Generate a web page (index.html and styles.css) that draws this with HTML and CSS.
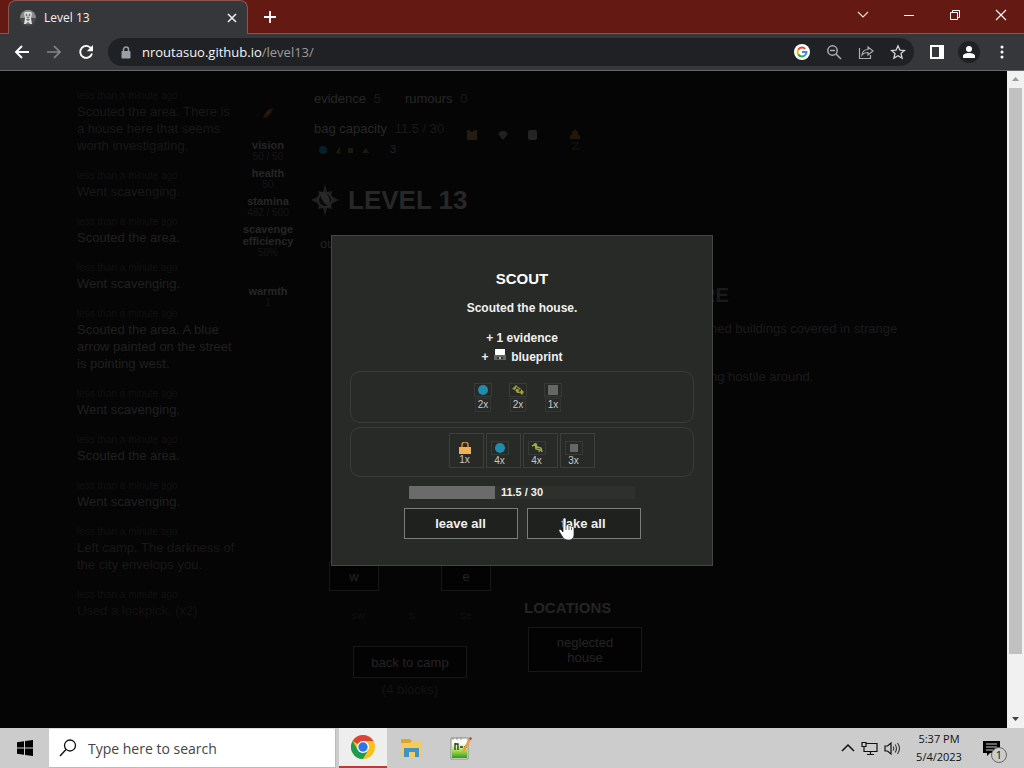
FILE: index.html
```html
<!DOCTYPE html>
<html lang="en">
<head>
<meta charset="utf-8">
<meta name="viewport" content="width=device-width, initial-scale=1">
<title>Level 13</title>
<link rel="stylesheet" href="styles.css">
</head>
<body>
<header class="tabbar">
  <div class="tab">
    <svg class="favicon" width="16" height="16" viewBox="0 0 16 16"><circle cx="8" cy="8" r="8" fill="#4a4a4a"/><path d="M0 8a8 8 0 0 1 16 0z" fill="#8a8a8a"/><path d="M5 2h6l1 2-1 4 1 6H4l1-6-1-4z" fill="#ddd"/><path d="M6 4h1v2H6zM9 4h1v2H9zM7 7h2v1H7zM6 9l2 2 2-2M6 14l2-2 2 2" fill="#777" stroke="#777" stroke-width=".6"/></svg>
    <span class="tab-title">Level 13</span>
    <button class="icon-btn" aria-label="Close tab"><svg width="10" height="10" viewBox="0 0 10 10"><path d="M1 1l8 8M9 1L1 9" stroke="#eee" stroke-width="1.6"/></svg></button>
  </div>
  <button class="icon-btn new-tab" aria-label="New tab"><svg width="14" height="14" viewBox="0 0 14 14"><path d="M7 1v12M1 7h12" stroke="#fff" stroke-width="1.8"/></svg></button>
  <div class="window-controls">
    <button class="icon-btn" aria-label="Search tabs"><svg width="12" height="12" viewBox="0 0 12 12"><path d="M1 3l5 5 5-5" fill="none" stroke="#f2ddd9" stroke-width="1.1"/></svg></button>
    <button class="icon-btn" aria-label="Minimize"><svg width="12" height="12" viewBox="0 0 12 12"><path d="M1 6.5h10" stroke="#fff"/></svg></button>
    <button class="icon-btn" aria-label="Restore"><svg width="12" height="12" viewBox="0 0 12 12"><path d="M3.5 3V1.500h7v7H9M1.500 3.500h7v7h-7z" fill="none" stroke="#fff"/></svg></button>
    <button class="icon-btn" aria-label="Close"><svg width="12" height="12" viewBox="0 0 12 12"><path d="M1 1l10 10M11 1L1 11" stroke="#fff" stroke-width="1.1"/></svg></button>
  </div>
</header>
<nav class="toolbar">
  <button class="icon-btn" aria-label="Back"><svg width="16" height="16" viewBox="0 0 16 16"><path d="M15 8H2M8 2L2 8l6 6" fill="none" stroke="#fff" stroke-width="1.9"/></svg></button>
  <button class="icon-btn" aria-label="Forward"><svg width="16" height="16" viewBox="0 0 16 16"><path d="M1 8h13M8 2l6 6-6 6" fill="none" stroke="#85878a" stroke-width="1.7"/></svg></button>
  <button class="icon-btn" aria-label="Reload"><svg width="16" height="16" viewBox="0 0 16 16"><path d="M13.200 4.500A6 6 0 1 0 14 9.500" fill="none" stroke="#fff" stroke-width="1.900"/><path d="M15 1v6.200H8.800z" fill="#fff"/></svg></button>
  <div class="omnibox">
    <svg width="10" height="13" viewBox="0 0 10 13"><path d="M2.500 6V3.500a2.500 2.500 0 0 1 5 0V6" fill="none" stroke="#9aa0a6" stroke-width="1.500"/><rect x=".5" y="5" width="9" height="7.500" rx="1" fill="#9aa0a6"/></svg>
    <span class="url">nroutasuo.github.io<span class="path">/level13/</span></span>
    <div class="omni-icons">
      <svg width="16" height="16" viewBox="0 0 16 16"><circle cx="8" cy="8" r="8" fill="#fff"/><g fill="none" stroke-width="2"><path d="M4.200 5.600A4.500 4.500 0 0 1 11.200 4.900" stroke="#ea4335"/><path d="M4.200 10.400a4.600 4.600 0 0 1 0-4.800" stroke="#fbbc05"/><path d="M11 11.300a4.500 4.500 0 0 1-6.800-.9" stroke="#34a853"/><path d="M8 8h4.500a4.500 4.500 0 0 1-1.500 3.300" stroke="#4285f4"/></g></svg>
      <svg width="16" height="16" viewBox="0 0 16 16"><g fill="none" stroke="#aaadb1" stroke-width="1.500"><circle cx="6.500" cy="6.500" r="4.700"/><path d="M10 10l5 5M4 6.500h5"/></g></svg>
      <svg width="16" height="16" viewBox="0 0 16 16"><g fill="none" stroke="#aaadb1" stroke-width="1.200"><path d="M1.500 4v10.500h11V11"/><path d="M4 11c.5-4 2.500-5.500 6-5.500V3l5 4-5 4V8.500C7 8.500 5.500 9 4 11z"/></g></svg>
      <svg width="16" height="16" viewBox="0 0 16 16"><path d="M8 1.800l1.900 4.300 4.600.4L11 9.500l1.100 4.600L8 11.700l-4.100 2.400L5 9.500 1.500 6.500l4.600-.4z" fill="none" stroke="#d0d2d5" stroke-width="1.300"/></svg>
    </div>
  </div>
  <div class="tools">
    <button class="icon-btn" aria-label="Side panel"><svg width="14" height="14" viewBox="0 0 14 14"><path d="M1 1h12v12H1z" fill="none" stroke="#fff" stroke-width="2"/><path d="M9 1h4v12H9z" fill="#fff"/></svg></button>
    <button class="icon-btn" aria-label="Profile"><svg width="22" height="22" viewBox="0 0 22 22"><circle cx="11" cy="11" r="11" fill="#202124"/><circle cx="11" cy="8" r="3" fill="#fff"/><path d="M5 17v-2c0-4 12-4 12 0v2z" fill="#fff"/></svg></button>
    <button class="icon-btn" aria-label="Menu"><svg width="16" height="16" viewBox="0 0 16 16" fill="#fff"><circle cx="8" cy="3" r="1.500"/><circle cx="8" cy="8" r="1.500"/><circle cx="8" cy="13" r="1.500"/></svg></button>
  </div>
</nav>

<div class="viewport">
  <main class="game">
    <ul class="log">
      <li class="faint"><small>less than a minute ago</small><p>Scouted the area. There is<br>a house here that seems<br>worth investigating.</p></li>
      <li class="faint"><small>less than a minute ago</small><p>Went scavenging.</p></li>
      <li><small>less than a minute ago</small><p>Scouted the area.</p></li>
      <li><small>less than a minute ago</small><p>Went scavenging.</p></li>
      <li><small>less than a minute ago</small><p>Scouted the area. A blue<br>arrow painted on the street<br>is pointing west.</p></li>
      <li><small>less than a minute ago</small><p>Went scavenging.</p></li>
      <li><small>less than a minute ago</small><p>Scouted the area.</p></li>
      <li><small>less than a minute ago</small><p>Went scavenging.</p></li>
      <li class="faint"><small>less than a minute ago</small><p>Left camp. The darkness of<br>the city envelops you.</p></li>
      <li class="fainter"><small>less than a minute ago</small><p>Used a lockpick. (x2)</p></li>
    </ul>
    <aside class="stats">
      <svg width="18" height="18" viewBox="0 0 18 18"><path d="M14 3c-4 0-9 4-10 10 5 1 9-4 10-10z" fill="#240d06"/><path d="M12 4c-3 2-5 4-6 7 3-1 5-3 6-7z" fill="#25211b"/></svg>
      <dl>
        <dt>vision</dt><dd>50 / 50</dd>
        <dt>health</dt><dd>50</dd>
        <dt>stamina</dt><dd>482 / 500</dd>
        <dt>scavenge<br>efficiency</dt><dd>50%</dd>
        <dt class="warmth">warmth</dt><dd>1</dd>
      </dl>
    </aside>
    <section class="world">
      <div class="resources">
        <div class="bag">
          <p><b>evidence</b> <i>5</i><b class="next">rumours</b> <i>0</i></p>
          <p class="capacity"><b>bag capacity</b> <i>11.5 / 30</i></p>
          <svg width="76" height="12" viewBox="0 0 76 12"><circle cx="9" cy="6" r="4" fill="#06202a"/><path d="M22 9l4-7v8M34 4h5v5h-5zM48 9l4-5 3 5zM64 4l5 4" fill="#1b180c"/></svg><span class="count">3</span>
        </div>
        <svg class="items" width="120" height="28" viewBox="0 0 120 28"><path d="M2 3h2l3 2 3-2h2v10H2z" fill="#231d0f"/><path d="M33 7l3-3h4l3 3-5 6z" fill="#1f2020"/><rect x="63" y="3" width="9" height="10" rx="2" fill="#242424"/><path d="M105 12V8h10v4zM107 8V5l3-3 3 3v3" fill="#221608"/><path d="M106 16h8l-7 6h8" fill="none" stroke="#1b1407"/></svg>
      </div>
      <h1><svg width="34" height="34" viewBox="0 0 34 34"><path d="M17 1l2 8 5-1-1 5 8 4-8 4 1 5-5-1-2 8-2-8-5 1 1-5-8-4 8-4-1-5 5 1z" fill="#202020"/><circle cx="17" cy="17" r="7" fill="#0a0a0a" stroke="#252525" stroke-width="2"/><path d="M12 9c6-1 12 6 9 14-5-2-9-8-9-14z" fill="#292929"/></svg>LEVEL 13</h1>
      <p class="mode">out</p>
      <div class="columns">
        <div class="movement">
          <div class="pad"><button>w</button><button>e</button></div>
          <div class="dirs"><span>sw</span><span>s</span><span>se</span></div>
          <button class="camp">back to camp</button>
          <p class="blocks">(4 blocks)</p>
        </div>
        <div class="place">
          <div class="description">
            <h2>RE</h2>
            <p>ned buildings covered in strange</p>
            <p>ng hostile around.</p>
          </div>
          <h3>LOCATIONS</h3>
          <button class="house">neglected<br>house</button>
        </div>
      </div>
    </section>
  </main>
  <div class="overlay">
    <div class="popup" role="dialog" aria-labelledby="popup-title">
      <h2 id="popup-title">SCOUT</h2>
      <p>Scouted the house.</p>
      <p class="gains">+ 1 evidence<br>+ <svg width="12" height="12" viewBox="0 0 12 12"><path d="M1 0h10v6H1z" fill="#fff"/><path d="M0 6h12v5H0z" fill="#666"/><path d="M3 8h6v2H3z" fill="#333"/><path d="M5 8h2v2H5z" fill="#bbb"/></svg> blueprint</p>
      <ul class="slots found">
        <li><span><svg width="12" height="12" viewBox="0 0 12 12"><circle cx="6" cy="6" r="5" fill="#218bae"/></svg></span><b>2x</b></li>
        <li><span><svg width="12" height="12" viewBox="0 0 12 12"><path d="M0 5l4-4 2 2 2 1 4 4-2 3-2-2-3 0-2-3z" fill="#9b9b3c"/><path d="M4 3l5 4M3 6l2-2M7 8l2-3" stroke="#32351d"/></svg></span><b>2x</b></li>
        <li><span><svg width="12" height="12" viewBox="0 0 12 12"><path d="M1 1h10v10H1z" fill="#666"/></svg></span><b>1x</b></li>
      </ul>
      <ul class="slots taken">
        <li class="own"><svg width="12" height="12" viewBox="0 0 12 12"><path d="M3 6V3a3 3 0 0 1 6 0v3" fill="none" stroke="#d38c2c" stroke-width="1.500"/><path d="M0 5h12v7H0z" fill="#efb15b"/></svg><b>1x</b></li>
        <li><span><svg width="12" height="12" viewBox="0 0 12 12"><circle cx="6" cy="6" r="5" fill="#218bae"/></svg></span><b>4x</b></li>
        <li><span><svg width="12" height="12" viewBox="0 0 12 12"><path d="M1 4l4-2 1 3 4 1 1 4M4 1l1 6 4 1-1 2" fill="none" stroke="#9fad3e" stroke-width="1.500"/></svg></span><b>4x</b></li>
        <li><span><svg width="12" height="12" viewBox="0 0 12 12"><path d="M2 2h8v8H2z" fill="#666"/></svg></span><b>3x</b></li>
      </ul>
      <div class="meter"><div class="fill" style="width:38%"></div><span>11.5 / 30</span></div>
      <div class="actions">
        <button>leave all</button>
        <button class="take">take all<svg class="pointer" width="18" height="24" viewBox="0 0 18 24"><path d="M5 2.500C5 .5 8 .5 8 2.500V9c0-2 3-2 3 .5 0-1.500 2.500-1.500 2.500.8 0-1.500 2.500-1 2.500 1V17c0 4-2 6-6 6-3 0-4.500-1.500-6-4l-3-5c-.5-1.500 1.500-2.200 2.500-.8L5 15z" fill="#fff" stroke="#222" stroke-width=".7"/><path d="M8 9v4M11 10v3M13.500 11v2" stroke="#333" stroke-width=".8"/></svg></button>
      </div>
    </div>
  </div>
  <div class="scrollbar">
    <svg width="9" height="6" viewBox="0 0 9 6"><path d="M1 5l3.500-4L8 5z" fill="#999"/></svg>
    <div class="thumb"></div>
    <svg width="9" height="6" viewBox="0 0 9 6"><path d="M1 1l3.500 4L8 1z" fill="#444"/></svg>
  </div>
</div>

<footer class="taskbar">
  <button class="icon-btn start" aria-label="Start"><svg width="16" height="16" viewBox="0 0 16 16"><path d="M0 2.300l7-1v6.200H0zM8 1.100L16 0v7.500H8zM0 8.500h7v6.200l-7-1zM8 8.500h8V16l-8-1.100z" fill="#000"/></svg></button>
  <label class="search"><svg width="18" height="18" viewBox="0 0 18 18"><circle cx="11" cy="6.500" r="5.500" fill="none" stroke="#111" stroke-width="1.300"/><path d="M7 10.500L1 17" stroke="#111" stroke-width="1.400"/></svg><input type="text" placeholder="Type here to search" aria-label="Search"></label>
  <button class="icon-btn app active" aria-label="Chrome"><svg width="24" height="24" viewBox="0 0 24 24"><circle cx="12" cy="12" r="12" fill="#fbc116"/><path d="M12 12L1.600 6A12 12 0 0 1 22.400 6H12z" fill="#db4437"/><path d="M1.600 6A12 12 0 0 0 12 24l5.200-9H12L6.800 15z" fill="#1e9b52"/><circle cx="12" cy="12" r="6" fill="#fff"/><circle cx="12" cy="12" r="4.700" fill="#2e75e8"/></svg></button>
  <button class="icon-btn app" aria-label="File Explorer"><svg width="24" height="22" viewBox="0 0 24 22"><path d="M1 2h9l2 2h10v16H1z" fill="#f6cb5d"/><path d="M1 2h9l2 2-2 2H1z" fill="#dfa32f"/><path d="M4 11h15v9h-4v-5H9v5H4z" fill="#3e94c9"/></svg></button>
  <button class="icon-btn app" aria-label="Notepad++"><svg width="24" height="24" viewBox="0 0 24 24"><defs><linearGradient id="leaf" x2="0" y2="1"><stop offset="0" stop-color="#f4faea"/><stop offset=".5" stop-color="#a5dc4e"/><stop offset="1" stop-color="#2f9a1c"/></linearGradient></defs><path d="M2 2h17v21H2z" fill="#f9fbf6" stroke="#8a8d85"/><path d="M3 8h15v14H3z" fill="url(#leaf)"/><path d="M4 1v3M8 1v3M12 1v3" stroke="#999"/><path d="M6 7v7M6 8h3v6M11 11h3M15 11h3" stroke="#28351d" stroke-width="1.300" fill="none"/><path d="M21 1l2 1-7 13-3 2 1-4z" fill="#e8a13c"/><path d="M21 1l2 1-1 2-2-1z" fill="#b5444e"/></svg></button>
  <div class="tray">
    <svg width="14" height="10" viewBox="0 0 14 10"><path d="M1 8l6-6 6 6" fill="none" stroke="#111" stroke-width="1.500"/></svg>
    <svg width="17" height="15" viewBox="0 0 17 15"><path d="M5 2.500h11v8H3V7M9.500 10.500v3M6 13.500h7M1 1.500h4v4H1zM3 5.500V8" fill="none" stroke="#111" stroke-width="1.200"/></svg>
    <svg width="17" height="15" viewBox="0 0 17 15"><path d="M1 5h2.500L7 2v11L3.500 10H1z" fill="none" stroke="#111" stroke-width="1.200"/><path d="M9 5.500q1.500 2 0 4M11 3.500q3 4 0 8M13.500 2q4 5.500 0 11" fill="none" stroke="#333" stroke-width="1.100"/></svg>
    <div class="clock">5:37 PM<br>5/4/2023</div>
    <div class="notice"><svg width="17" height="17" viewBox="0 0 17 17"><path d="M0 1h17v12H7l-3 3v-3H0z" fill="#000"/><path d="M3 4h11M3 7h11M3 10h7" stroke="#ccc"/></svg><span>1</span></div>
  </div>
</footer>
</body>
</html>
```

FILE: styles.css
```css
* { box-sizing: border-box; }
body {
  margin: 0;
  height: 100vh;
  display: flex;
  flex-direction: column;
  overflow: hidden;
  background: #050505;
  font-family: "Liberation Sans", Arial, sans-serif;
  font-size: 13px;
}
p, h1, h2, h3, ul, dl, dd { margin: 0; padding: 0; }
ul { list-style: none; }
button { font: inherit; color: inherit; padding: 0; }
svg { display: block; flex: none; }
.icon-btn {
  display: flex;
  align-items: center;
  justify-content: center;
  border: 0;
  background: none;
}

/* Browser frame */
.tabbar {
  flex: none;
  display: flex;
  height: 34px;
  padding-left: 8px;
  background: #641912;
  border-bottom: 1px solid #8b5550;
}
.tab {
  display: flex;
  align-items: center;
  width: 240px;
  height: 34px;
  padding: 0 10px 0 11px;
  gap: 8px;
  background: #36373a;
  border: 1px solid #8b5550;
  border-bottom: 0;
  border-radius: 8px 8px 0 0;
  color: #f1f1f1;
  font-family: "Open Sans", "Noto Sans", sans-serif;
  font-size: 12px;
}
.tab-title { flex: 1; }
.new-tab { width: 44px; }
.window-controls { display: flex; margin-left: auto; height: 29px; }
.window-controls .icon-btn { width: 46px; }
.toolbar {
  flex: none;
  display: flex;
  align-items: center;
  height: 37px;
  padding: 0 14px;
  gap: 16px;
  background: #36373a;
  border-bottom: 1px solid #66676a;
}
.tools { display: flex; align-items: center; gap: 14px; }
.omnibox {
  flex: 1;
  display: flex;
  align-items: center;
  height: 28px;
  margin-left: -2px;
  padding: 0 8px 0 13px;
  gap: 11px;
  border-radius: 14px;
  background: #202124;
  color: #f4f4f4;
  font-family: "Open Sans", "Noto Sans", sans-serif;
  font-size: 13px;
}
.path { color: #999b9e; }
.omni-icons { display: flex; gap: 16px; margin-left: auto; }

/* Page */
.viewport { flex: 1; min-height: 0; display: flex; position: relative; }
.game {
  flex: 1;
  min-width: 0;
  display: flex;
  padding: 18px 24px 0 77px;
  background: #050505;
  color: #232323;
}
.log { width: 163px; line-height: 17px; color: #202020; white-space: nowrap; }
.log li { margin-bottom: 15px; }
.log small { display: block; font-size: 10px; line-height: 14px; color: #111; }
.log .faint { color: #181818; }
.log .fainter { color: #111; }
.stats { width: 56px; padding-top: 16px; font-size: 11px; text-align: center; }
.stats svg { margin: 0 auto; }
.stats dl { padding-top: 16px; line-height: 12px; white-space: nowrap; }
.stats dt { color: #262626; font-weight: bold; }
.stats dd { margin-bottom: 4px; font-size: 10px; color: #151515; }
.stats .warmth { margin-top: 26px; }
.world { flex: 1; padding-left: 18px; }
.resources { display: flex; }
.resources i { font-style: normal; color: #191919; }
.bag { width: 151px; white-space: nowrap; line-height: 20px; }
.bag b { font-weight: normal; color: #272727; margin-right: 4px; }
.bag .next { margin-left: 24px; }
.bag svg { display: inline-block; vertical-align: middle; }
.count { font-size: 11px; }
.capacity { margin-top: 10px; }
.items { margin-top: 38px; }
h1 {
  display: flex;
  align-items: center;
  gap: 6px;
  height: 34px;
  margin: 24px 0 0 -6px;
  font-size: 26px;
  color: #272727;
}
.mode { padding: 19px 0 0 6px; line-height: 16px; }
.columns { display: flex; padding-top: 31px; }
.movement { width: 210px; padding-top: 278px; }
.movement button, .place button { border: 1px solid #171717; background: #030303; }
.pad { display: flex; gap: 62px; padding-left: 15px; }
.pad button { width: 50px; height: 30px; }
.dirs { display: flex; padding: 16px 0 0 17px; font-size: 11px; line-height: 16px; color: #101010; }
.dirs span { width: 54px; text-align: center; }
.movement .camp { display: block; width: 114px; height: 32px; margin: 23px 0 0 39px; }
.blocks { margin: 4px 0 0 39px; width: 114px; text-align: center; line-height: 16px; color: #131313; }
.description { padding-left: 177px; height: 308px; white-space: nowrap; color: #1b1b1b; }
.description h2 { font-size: 20px; line-height: 24px; }
.description p { padding: 14px 0 0 9px; line-height: 16px; }
.description p + p { padding-top: 32px; }
.place h3 { font-size: 15px; line-height: 18px; margin-top: 8px; color: #242424; }
.place .house { display: block; width: 114px; height: 45px; margin: 10px 0 0 4px; line-height: 15px; }

/* Results popup */
.overlay {
  position: absolute;
  inset: 0 17px 0 0;
  display: flex;
  align-items: center;
  justify-content: center;
  padding: 2px 0 0 37px;
}
.popup {
  width: 382px;
  padding: 34px 18px 26px;
  border: 1px solid #454745;
  background: #282a28;
  color: #f0f0f0;
  text-align: center;
  font-size: 12px;
  font-weight: bold;
}
.popup h2 { font-size: 15px; line-height: 17px; color: #fff; }
.popup p { margin-top: 12px; line-height: 19px; }
.popup p svg { display: inline-block; margin: 0 2px; }
.popup .gains { margin-top: 11px; }
.slots {
  display: flex;
  justify-content: center;
  border: 1px solid #3a3c3a;
  border-radius: 10px;
}
.slots b { font-weight: normal; font-size: 10px; line-height: 12px; color: #c8c8c8; }
.slots span { display: flex; align-items: center; justify-content: center; width: 18px; height: 14px; border: 1px solid #383a38; }
.slots li { display: flex; flex-direction: column; align-items: center; }
.found { height: 52px; margin-top: 4px; padding: 11px 8px 0 0; gap: 17px; }
.found b { width: 16px; margin-top: 1px; border: 1px solid #343634; }
.taken { height: 50px; margin-top: 4px; padding-top: 5px; gap: 2px; }
.taken li { width: 35px; height: 35px; padding: 7px 8px 0 0; border: 1px solid #3d3f3d; }
.taken .own { padding: 8px 4px 0 0; }
.meter {
  position: relative;
  width: 226px;
  height: 13px;
  margin: 9px auto 0;
  background: #2e302e;
  font-size: 11px;
  line-height: 13px;
}
.fill { height: 100%; background: #6b6b6b; }
.meter span { position: absolute; inset: 0; }
.actions { display: flex; justify-content: center; gap: 9px; margin-top: 9px; }
.actions button {
  width: 114px;
  height: 31px;
  border: 1px solid #7b7d7b;
  background: #1f211f;
  font-size: 13px;
}
.actions .take { position: relative; }
.pointer { position: absolute; left: 30px; top: 8px; }

.scrollbar {
  flex: none;
  display: flex;
  flex-direction: column;
  align-items: center;
  width: 17px;
  padding: 5px 0 6px;
  background: #f1f1f1;
}
.thumb { width: 13px; height: 566px; margin: 6px 0 auto; background: #c1c1c1; }

/* Taskbar */
.taskbar { flex: none; display: flex; height: 40px; background: #ccc; font-family: "Open Sans", "Noto Sans", sans-serif; color: #111; }
.start { width: 49px; }
.search { display: flex; align-items: center; gap: 11px; width: 287px; padding: 0 10px; margin-right: 3px; background: #fff; border: 1px solid #bbb; border-top-color: #ddd; border-left: 0; }
.search input { flex: 1; min-width: 0; border: 0; padding: 0; background: none; font: inherit; font-size: 14px; }
.search input::placeholder { color: #444; opacity: 1; }
.app { width: 48px; }
.app + .app { margin-left: 1px; }
.active { background: #eee; border-bottom: 2px solid #bd3b34; }
.tray { display: flex; align-items: center; margin-left: auto; padding-right: 17px; gap: 6px; }
.clock { width: 58px; margin-left: 3px; text-align: center; font-size: 11px; line-height: 18px; white-space: nowrap; }
.notice { position: relative; width: 24px; margin-left: 9px; }
.notice span {
  position: absolute;
  left: 8px;
  top: 7px;
  width: 16px;
  height: 16px;
  border: 1px solid #666;
  border-radius: 50%;
  background: #ccc;
  font-size: 11px;
  line-height: 14px;
  text-align: center;
}
```
